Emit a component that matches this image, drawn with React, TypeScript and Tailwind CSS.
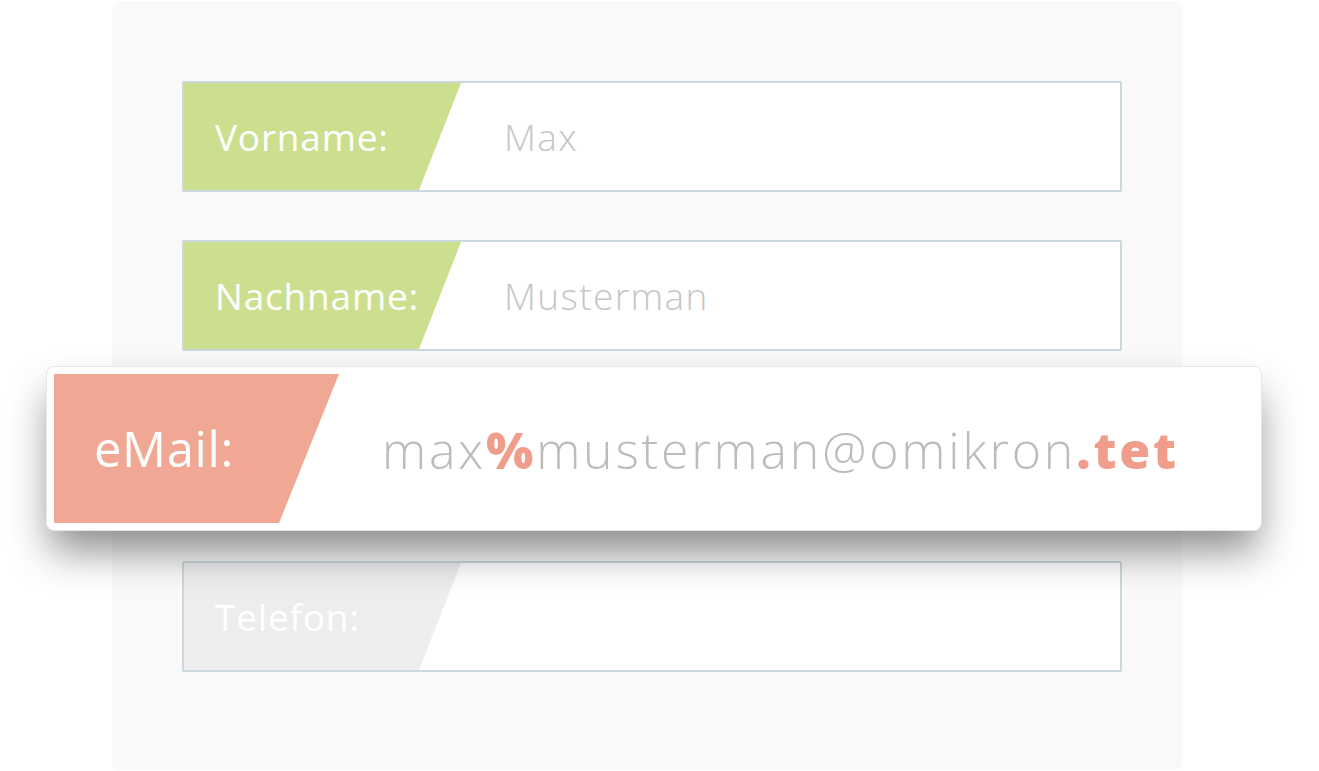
import React from 'react';

interface FieldProps {
  label: string;
  value?: string;
  tone: 'green' | 'gray';
}

const slant = '[clip-path:polygon(0_0,100%_0,calc(100%-42px)_100%,0_100%)]';

const Field: React.FC<FieldProps> = ({ label, value, tone }) => (
  <div className="flex h-[111px] w-[940px] items-stretch rounded-[2px] border-2 border-[#c9d9de] bg-white">
    <div
      className={`flex w-[277px] shrink-0 items-center pl-[31px] text-[37px] tracking-[0.8px] text-white ${slant} ${
        tone === 'green' ? 'bg-[#cbdf8e]' : 'bg-[#ededed]'
      }`}
    >
      {label}
    </div>
    {value && (
      <div className="flex items-center pl-[43px] text-[37px] font-light tracking-[1.4px] text-[#c6c6c6]">{value}</div>
    )}
  </div>
);

export default function App() {
  return (
    <div className="min-h-screen w-[1319px] bg-white pt-px" style={{ fontFamily: '"Open Sans", "Noto Sans", sans-serif' }}>
      <div className="ml-[112px] flex h-[769px] w-[1070px] flex-col rounded-[8px] bg-[#f9f9f9] pl-[70px] pt-[80px]">
        <Field label="Vorname:" value="Max" tone="green" />
        <div className="mt-[48px]">
          <Field label="Nachname:" value="Musterman" tone="green" />
        </div>

        <div className="relative z-10 -ml-[136px] mt-[15px] flex h-[165px] w-[1216px] rounded-[8px] border border-[#e6e6e6] bg-white p-[7px] shadow-[0_24px_40px_-4px_rgba(0,0,0,0.45)]">
          <div className="flex w-[285px] shrink-0 items-center bg-[#f0a895] pl-[40px] text-[49px] tracking-[0.6px] text-white [clip-path:polygon(0_0,100%_0,calc(100%-60px)_100%,0_100%)]">
            eMail:
          </div>
          <div className="flex items-center pl-[43px] pt-[4px] text-[50px] font-light tracking-[2.8px] text-[#bcbcbc]">
            <span>max</span>
            <span className="font-extrabold text-[#f19d8c]">%</span>
            <span>musterman@omikron</span>
            <span className="font-extrabold text-[#f19d8c]">.tet</span>
          </div>
        </div>

        <div className="mt-[30px]">
          <Field label="Telefon:" tone="gray" />
        </div>
      </div>
    </div>
  );
}
